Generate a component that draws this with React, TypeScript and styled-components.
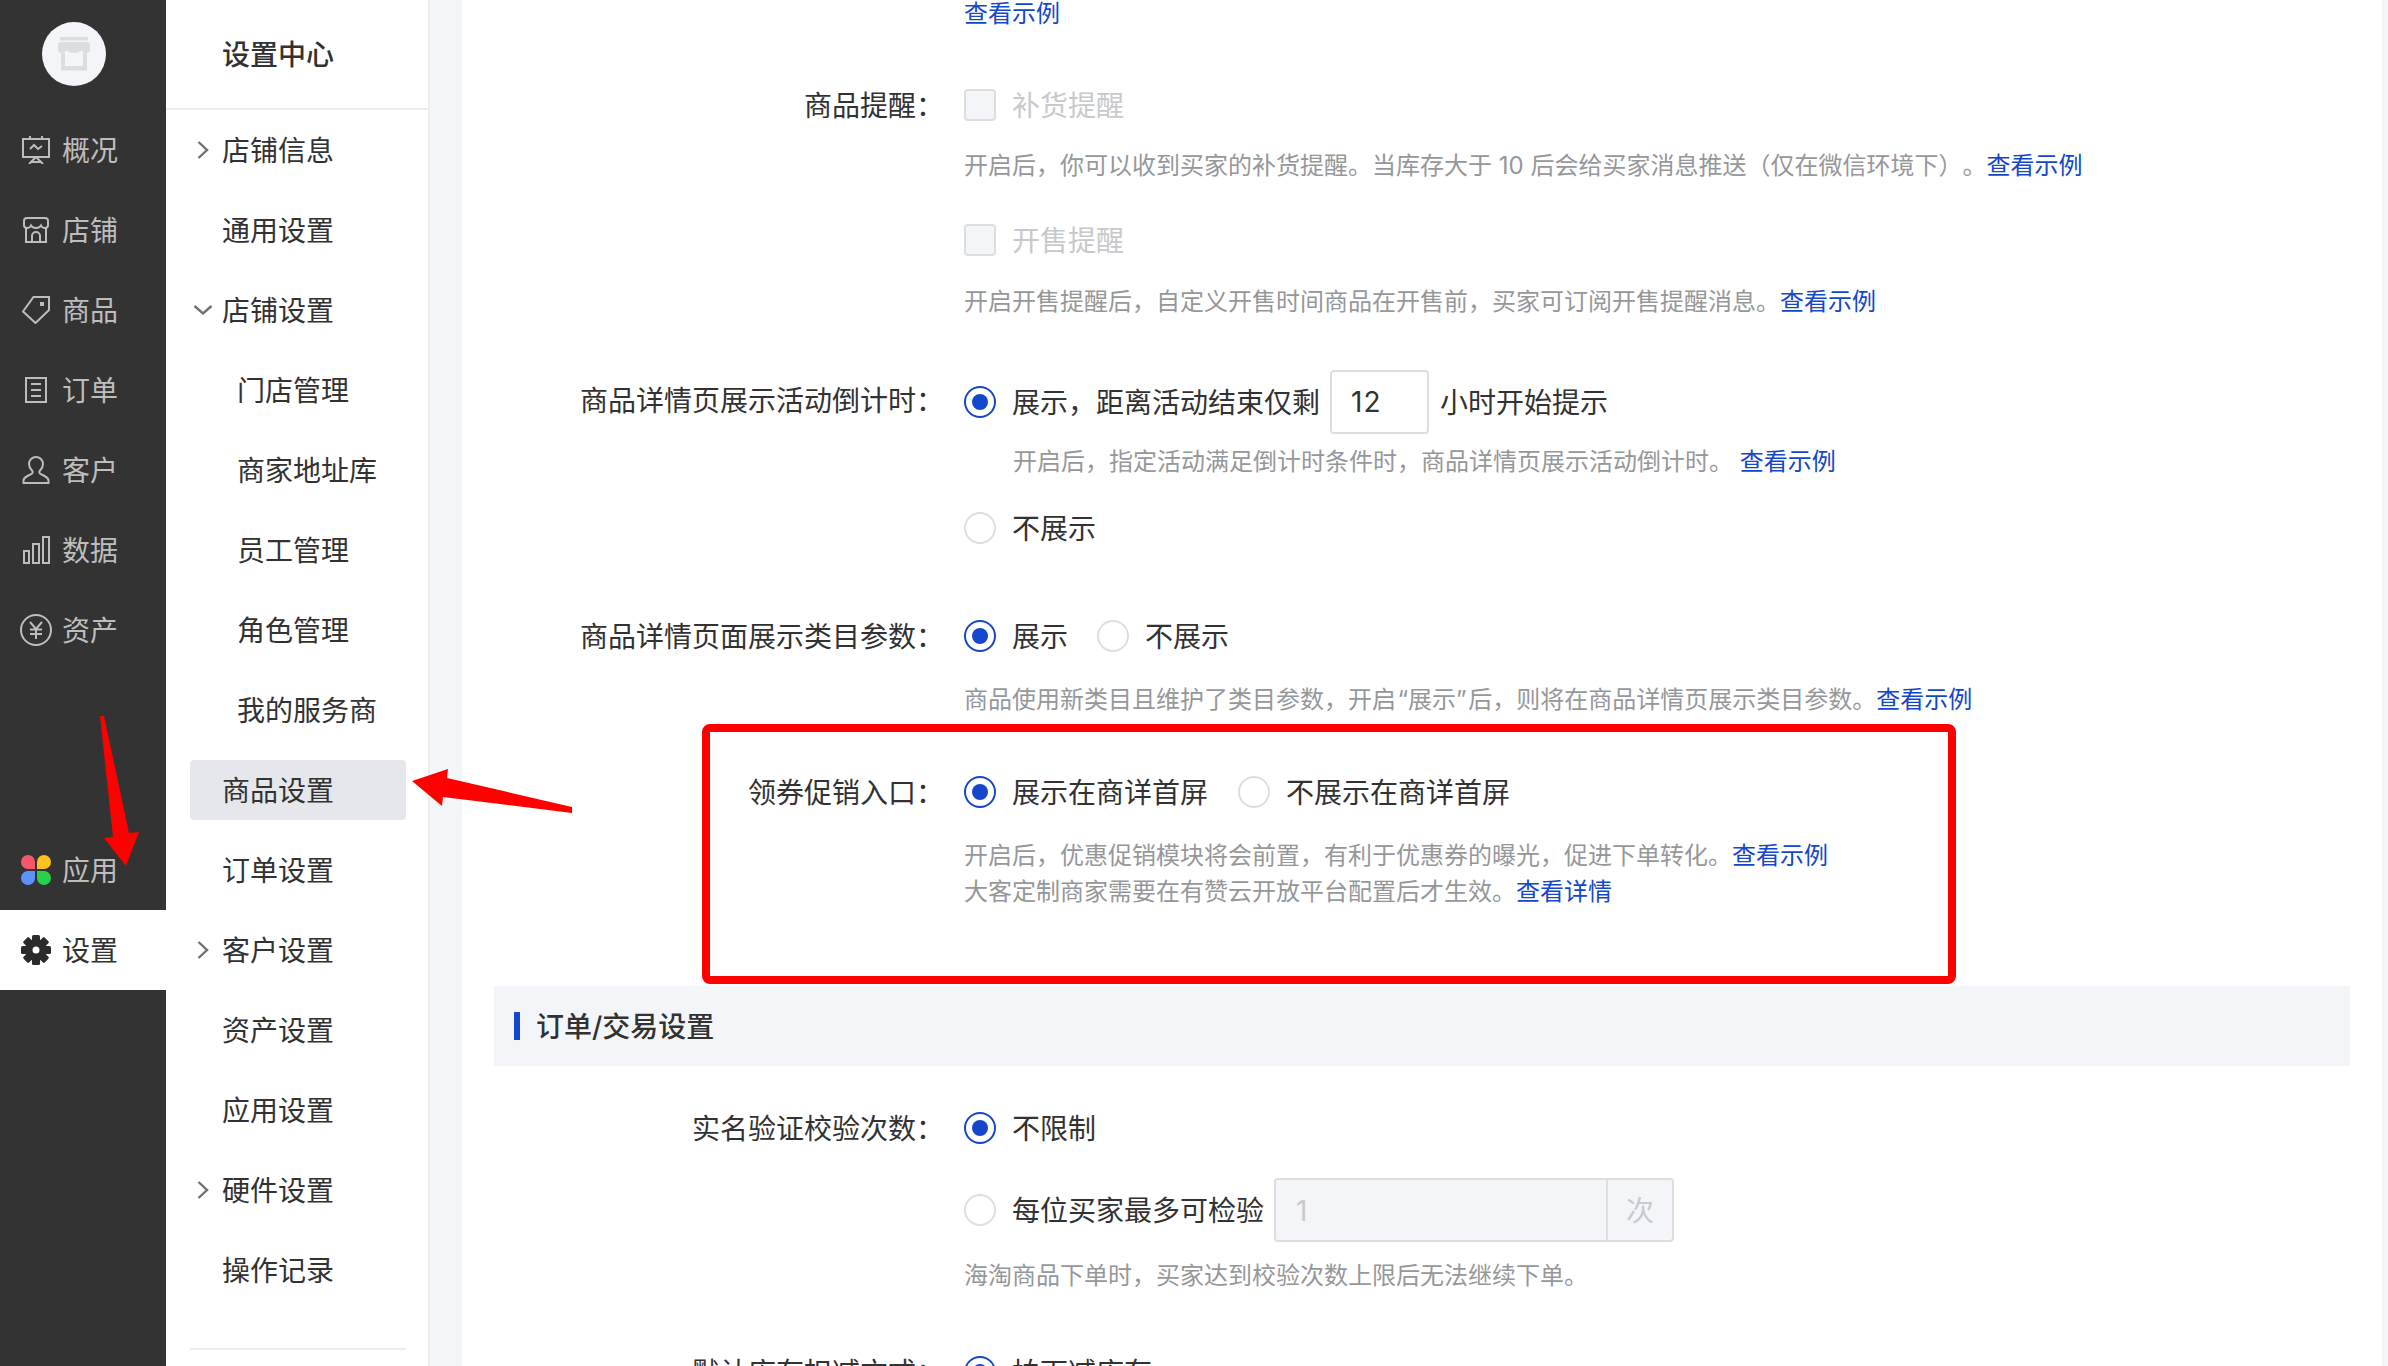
import React from "react"
import styled, { createGlobalStyle } from "styled-components"

const GlobalStyle = createGlobalStyle`
  html, body {
    margin: 0;
    padding: 0;
    background: #f4f5f9;
  }
  * {
    box-sizing: border-box;
  }
`

const Shell = styled.div`
  position: relative;
  display: flex;
  width: 2388px;
  height: 1366px;
  overflow: hidden;
  background: #f4f5f9;
  font-family: Inter, "Noto Sans CJK SC", sans-serif;
  font-size: 28px;
  color: #323233;
  text-spacing-trim: space-all;
`

const Nav = styled.nav`
  flex: 0 0 166px;
  background: #333;
`

const LogoWrap = styled.div`
  display: flex;
  height: 110px;
  padding: 22px 0 0 42px;
`

const Logo = styled.div`
  display: flex;
  align-items: center;
  justify-content: center;
  width: 64px;
  height: 64px;
  border-radius: 50%;
  background: #f4f5f9;
`

const NavItem = styled.div<{ $active?: boolean }>`
  display: flex;
  align-items: center;
  height: 80px;
  padding-bottom: 2px;
  background: ${p => (p.$active ? "#fff" : "transparent")};
  color: ${p => (p.$active ? "#323233" : "#bdbdbd")};
`

const NavIcon = styled.span`
  display: flex;
  align-items: center;
  justify-content: center;
  flex: 0 0 32px;
  margin: 2px 10px 0 20px;
`

const NavSpacer = styled.div`
  height: 160px;
`

const SubNav = styled.aside`
  flex: 0 0 264px;
  background: #fff;
  border-right: 2px solid #ebedf0;
`

const SubTitle = styled.div`
  display: flex;
  align-items: center;
  height: 110px;
  padding-left: 56px;
  padding-bottom: 2px;
  border-bottom: 2px solid #ebedf0;
  font-weight: 500;
`

const SubList = styled.div`
  display: flex;
  flex-direction: column;
  gap: 20px;
  padding: 10px 22px 0 24px;
`

const SubItem = styled.div<{ $active?: boolean; $child?: boolean }>`
  display: flex;
  align-items: center;
  height: 60px;
  padding-left: ${p => (p.$child ? "47px" : "0")};
  padding-bottom: 2px;
  border-radius: 4px;
  background: ${p => (p.$active ? "#e6e7ec" : "transparent")};
`

const CaretSlot = styled.span`
  display: flex;
  align-items: center;
  justify-content: center;
  flex: 0 0 32px;
  margin-top: 2px;
  padding-right: 6px;
`

const SubDivider = styled.div`
  height: 2px;
  margin: 48px 22px 0 24px;
  background: #ebedf0;
`

const Main = styled.main`
  flex: 0 0 1920px;
  height: 1400px;
  margin-left: 32px;
  padding: 0 32px;
  background: #fff;
`

const Scrolled = styled.div`
  margin-top: -4px;
`

const FormRow = styled.div<{ $top: number }>`
  display: flex;
  align-items: flex-start;
  margin-top: ${p => p.$top}px;
`

const Label = styled.label<{ $offset?: number }>`
  flex: 0 0 450px;
  margin-top: ${p => p.$offset ?? 0}px;
  margin-right: 20px;
  line-height: 42px;
  text-align: right;
  white-space: nowrap;
`

const Controls = styled.div`
  flex: 1;
  min-width: 0;
`

const Line = styled.div<{ $height?: number; $top?: number }>`
  display: flex;
  align-items: center;
  height: ${p => p.$height ?? 40}px;
  margin-top: ${p => p.$top ?? 0}px;
  white-space: nowrap;
`

const Choice = styled.span<{ $gap?: number }>`
  display: inline-flex;
  align-items: center;
  margin-right: ${p => p.$gap ?? 0}px;
`

const ChoiceText = styled.span`
  padding-bottom: 2px;
`

const RadioMark = styled.span<{ $on?: boolean }>`
  display: flex;
  align-items: center;
  justify-content: center;
  flex: 0 0 32px;
  height: 32px;
  margin-right: 16px;
  border-radius: 50%;
  border: 2px solid ${p => (p.$on ? "#1447cb" : "#dcdee0")};
  background: #fff;

  &::after {
    content: "";
    display: ${p => (p.$on ? "block" : "none")};
    width: 16px;
    height: 16px;
    border-radius: 50%;
    background: #1447cb;
  }
`

const CheckMark = styled.span`
  flex: 0 0 32px;
  height: 32px;
  margin-right: 16px;
  border-radius: 4px;
  border: 2px solid #dcdee0;
  background: #f4f5f9;
`

const Disabled = styled.span`
  padding-bottom: 2px;
  color: #c8c9cc;
`

const Help = styled.div<{ $top?: number; $indent?: number }>`
  height: 36px;
  margin-top: ${p => p.$top ?? 0}px;
  padding-left: ${p => p.$indent ?? 0}px;
  font-size: 24px;
  line-height: 36px;
  color: #969799;
  white-space: nowrap;
`

const Quoted = styled.span`
  padding: 0 1.5px;
`

const Anchor = styled.a`
  color: #1447cb;
`

const NumberBox = styled.span`
  display: flex;
  align-items: center;
  width: 99px;
  height: 64px;
  margin: 0 11px 0 10px;
  padding-left: 19px;
  border: 2px solid #dcdee0;
  border-radius: 4px;
  color: #323233;
  letter-spacing: 1px;
`

const InputGroup = styled.span`
  display: flex;
  width: 400px;
  height: 64px;
  margin-left: 10px;
  border: 2px solid #dcdee0;
  border-radius: 4px;
  background: #f4f5f9;
  color: #c8c9cc;
`

const InputValue = styled.span`
  display: flex;
  align-items: center;
  flex: 1;
  padding: 2px 0 0 20px;
`

const InputAddon = styled.span`
  display: flex;
  align-items: center;
  justify-content: center;
  flex: 0 0 66px;
  padding-bottom: 2px;
  border-left: 2px solid #dcdee0;
`

const SectionBand = styled.div<{ $top: number }>`
  display: flex;
  align-items: center;
  height: 80px;
  margin-top: ${p => p.$top}px;
  padding-left: 20px;
  padding-bottom: 2px;
  background: #f4f5f9;
  font-weight: 500;

  &::before {
    content: "";
    width: 6px;
    height: 28px;
    margin-top: 2px;
    margin-right: 16px;
    background: #1447cb;
  }
`

const RedBox = styled.div`
  position: absolute;
  left: 702px;
  top: 724px;
  width: 1254px;
  height: 260px;
  border: 8px solid #fe0000;
  border-radius: 8px;
  pointer-events: none;
`

const ArrowLayer = styled.svg`
  position: absolute;
  left: 0;
  top: 0;
  pointer-events: none;
`

const Chevron = ({ open }: { open?: boolean }) => (
  <svg width="20" height="20" viewBox="0 0 20 20" fill="none" stroke="#707070" strokeWidth="2.4">
    {open ? <path d="M1.500 6 L10 13.500 L18.500 6" /> : <path d="M5.500 2 L14 10 L5.500 18" />}
  </svg>
)

const stroke = { fill: "none", stroke: "#bdbdbd", strokeWidth: 2 }

const icons: Record<string, React.ReactNode> = {
  概况: (
    <svg width="28" height="28" viewBox="0 0 28 28" {...stroke}>
      <path d="M1 3 H27 V21 H1 Z M8 0 V3 M20 0 V3" />
      <path d="M8 13 L12 9 L16 13 L20 10" />
      <path d="M14 21 L7 28 M14 21 L21 28 M9 26 H19" />
    </svg>
  ),
  店铺: (
    <svg width="28" height="28" viewBox="0 0 28 28" {...stroke}>
      <path d="M5 2 H23 Q26 2 26 5 V9 Q26 12 23 12 Q20 12 19 9.500 Q17.500 12 14 12 Q10.500 12 9 9.500 Q8 12 5 12 Q2 12 2 9 V5 Q2 2 5 2 Z" />
      <path d="M4 12 V26 H24 V12" />
      <path d="M10 26 V20 A4 4 0 0 1 18 20 V26" />
    </svg>
  ),
  商品: (
    <svg width="28" height="28" viewBox="0 0 28 28" {...stroke}>
      <path d="M11.500 1 H27 V14 L13.500 27 L1 15.500 Z" />
      <rect x="18" y="6" width="4" height="4" fill="#bdbdbd" stroke="none" />
    </svg>
  ),
  订单: (
    <svg width="24" height="28" viewBox="0 0 24 28" {...stroke}>
      <path d="M2 2 H22 V26 H2 Z M7 8 H17 M7 14 H17 M7 20 H17" />
    </svg>
  ),
  客户: (
    <svg width="28" height="28" viewBox="0 0 28 28" {...stroke}>
      <path d="M1.500 27 V24.500 C1.500 22 3.500 21 5.500 20 L9.500 18 C11 17 11 15.500 10 14.500 C8 12.500 7 10.500 7 8 A7 7 0 0 1 21 8 C21 10.500 20 12.500 18 14.500 C17 15.500 17 17 18.500 18 L22.500 20 C24.500 21 26.500 22 26.500 24.500 V27 Z" />
    </svg>
  ),
  数据: (
    <svg width="28" height="28" viewBox="0 0 28 28" {...stroke}>
      <path d="M2 15 H7 V27 H2 Z M11 8 H17 V27 H11 Z M21 1 H27 V27 H21 Z" />
    </svg>
  ),
  资产: (
    <svg width="32" height="32" viewBox="0 0 32 32" {...stroke}>
      <circle cx="16" cy="16" r="15" />
      <path d="M10 8 L16 15 L22 8 M16 15 V25 M10 15.500 H22 M10 20 H22" />
    </svg>
  ),
  应用: (
    <svg width="30" height="30" viewBox="0 0 30 30">
      <path d="M14 14 H7 A7 7 0 1 1 14 7 Z" fill="#f8566b" />
      <path d="M16 14 H23 A7 7 0 1 0 16 7 Z" fill="#fdc21c" />
      <path d="M14 16 H7 A7 7 0 1 0 14 23 Z" fill="#5b93fb" />
      <path d="M16 16 H23 A7 7 0 1 1 16 23 Z" fill="#28d14c" />
    </svg>
  ),
  设置: (
    <svg width="30" height="30" viewBox="0 0 30 30">
      {[0, 45, 90, 135].map(a => (
        <rect key={a} x="11" y="0" width="8" height="30" rx="1.500" fill="#2b2b2b" transform={`rotate(${a} 15 15)`} />
      ))}
      <circle cx="15" cy="15" r="11" fill="#2b2b2b" />
      <circle cx="15" cy="15" r="3.500" fill="#fff" />
    </svg>
  ),
}

const topNav = ["概况", "店铺", "商品", "订单", "客户", "数据", "资产"]

type SubEntry = { label: string; caret?: "right" | "down"; child?: boolean; active?: boolean }

const subEntries: SubEntry[] = [
  { label: "店铺信息", caret: "right" },
  { label: "通用设置" },
  { label: "店铺设置", caret: "down" },
  { label: "门店管理", child: true },
  { label: "商家地址库", child: true },
  { label: "员工管理", child: true },
  { label: "角色管理", child: true },
  { label: "我的服务商", child: true },
  { label: "商品设置", active: true },
  { label: "订单设置" },
  { label: "客户设置", caret: "right" },
  { label: "资产设置" },
  { label: "应用设置" },
  { label: "硬件设置", caret: "right" },
  { label: "操作记录" },
]

const NavRow = ({ name, active }: { name: string; active?: boolean }) => (
  <NavItem $active={active}>
    <NavIcon>{icons[name]}</NavIcon>
    {name}
  </NavItem>
)

const Radio = ({ on, gap, children }: { on?: boolean; gap?: number; children: React.ReactNode }) => (
  <Choice $gap={gap}>
    <RadioMark $on={on} />
    <ChoiceText>{children}</ChoiceText>
  </Choice>
)

const App = () => (
  <Shell>
    <GlobalStyle />
    <Nav>
      <LogoWrap>
        <Logo>
          <svg width="32" height="34" viewBox="0 0 32 34" fill="#dcdde1">
            <rect x="2" y="0" width="28" height="3.500" />
            <path d="M3 5 H29 Q32 5 32 9 V13 Q32 16 28 16 Q24.500 16 23.500 13 Q21 16 16 16 Q11 16 8.500 13 Q7.500 16 4 16 Q0 16 0 13 V9 Q0 5 3 5 Z" />
            <path d="M3 16 H7 V29 H25 V16 H29 V33.500 H3 Z" />
          </svg>
        </Logo>
      </LogoWrap>
      {topNav.map(name => (
        <NavRow key={name} name={name} />
      ))}
      <NavSpacer />
      <NavRow name="应用" />
      <NavRow name="设置" active />
    </Nav>

    <SubNav>
      <SubTitle>设置中心</SubTitle>
      <SubList>
        {subEntries.map(item => (
          <SubItem key={item.label} $active={item.active} $child={item.child}>
            {!item.child && <CaretSlot>{item.caret && <Chevron open={item.caret === "down"} />}</CaretSlot>}
            {item.label}
          </SubItem>
        ))}
      </SubList>
      <SubDivider />
    </SubNav>

    <Main>
      <Scrolled>
        <FormRow $top={0}>
          <Label />
          <Controls>
            <Help>
              <Anchor>查看示例</Anchor>
            </Help>
          </Controls>
        </FormRow>

        <FormRow $top={53}>
          <Label>商品提醒：</Label>
          <Controls>
            <Line>
              <CheckMark />
              <Disabled>补货提醒</Disabled>
            </Line>
            <Help $top={23}>
              开启后，你可以收到买家的补货提醒。当库存大于 10 后会给买家消息推送（仅在微信环境下）。<Anchor>查看示例</Anchor>
            </Help>
            <Line $top={36}>
              <CheckMark />
              <Disabled>开售提醒</Disabled>
            </Line>
            <Help $top={24}>
              开启开售提醒后，自定义开售时间商品在开售前，买家可订阅开售提醒消息。<Anchor>查看示例</Anchor>
            </Help>
          </Controls>
        </FormRow>

        <FormRow $top={50}>
          <Label $offset={10}>商品详情页展示活动倒计时：</Label>
          <Controls>
            <Line $height={64}>
              <Radio on>展示，距离活动结束仅剩</Radio>
              <NumberBox>12</NumberBox>
              <ChoiceText>小时开始提示</ChoiceText>
            </Line>
            <Help $top={10} $indent={49}>
              开启后，指定活动满足倒计时条件时，商品详情页展示活动倒计时。 <Anchor>查看示例</Anchor>
            </Help>
            <Line $top={28}>
              <Radio>不展示</Radio>
            </Line>
          </Controls>
        </FormRow>

        <FormRow $top={68}>
          <Label>商品详情页面展示类目参数：</Label>
          <Controls>
            <Line>
              <Radio on gap={29}>
                展示
              </Radio>
              <Radio>不展示</Radio>
            </Line>
            <Help $top={26}>
              商品使用新类目且维护了类目参数，开启<Quoted>“展示”</Quoted>后，则将在商品详情页展示类目参数。<Anchor>查看示例</Anchor>
            </Help>
          </Controls>
        </FormRow>

        <FormRow $top={54}>
          <Label>领券促销入口：</Label>
          <Controls>
            <Line>
              <Radio on gap={30}>
                展示在商详首屏
              </Radio>
              <Radio>不展示在商详首屏</Radio>
            </Line>
            <Help $top={26}>
              开启后，优惠促销模块将会前置，有利于优惠券的曝光，促进下单转化。<Anchor>查看示例</Anchor>
            </Help>
            <Help>
              大客定制商家需要在有赞云开放平台配置后才生效。<Anchor>查看详情</Anchor>
            </Help>
          </Controls>
        </FormRow>

        <SectionBand $top={76}>订单/交易设置</SectionBand>

        <FormRow $top={42}>
          <Label>实名验证校验次数：</Label>
          <Controls>
            <Line>
              <Radio on>不限制</Radio>
            </Line>
            <Line $height={64} $top={30}>
              <Radio>每位买家最多可检验</Radio>
              <InputGroup>
                <InputValue>1</InputValue>
                <InputAddon>次</InputAddon>
              </InputGroup>
            </Line>
            <Help $top={16}>海淘商品下单时，买家达到校验次数上限后无法继续下单。</Help>
          </Controls>
        </FormRow>

        <FormRow $top={58}>
          <Label>默认库存扣减方式：</Label>
          <Controls>
            <Line>
              <Radio on>拍下减库存</Radio>
            </Line>
          </Controls>
        </FormRow>
      </Scrolled>
    </Main>

    <RedBox />
    <ArrowLayer width="600" height="900" viewBox="0 0 600 900" fill="#fe0000">
      <polygon points="100,716 104,716 129,833 139,832 126,866 104,838 113,837" />
      <polygon points="412,781 448,769 447,778 572,807 572,813 443,797 442,806" />
    </ArrowLayer>
  </Shell>
)

export default App
